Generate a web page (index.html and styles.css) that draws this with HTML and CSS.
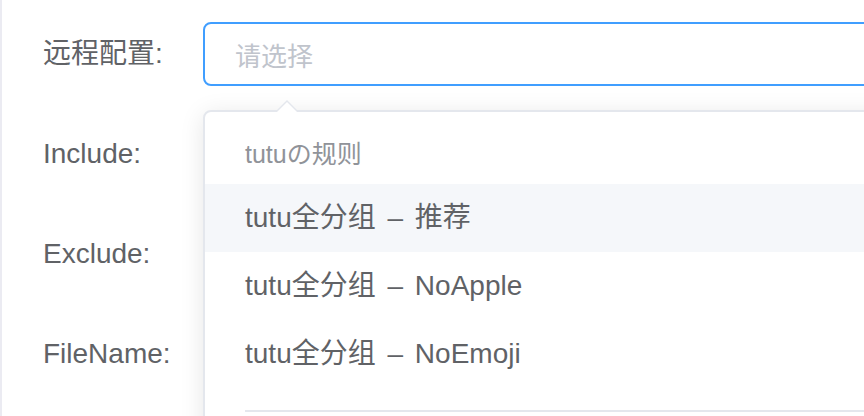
FILE: index.html
```html
<!DOCTYPE html>
<html lang="zh-CN">
<head>
<meta charset="utf-8">
<title>远程配置</title>
<link rel="stylesheet" href="styles.css">
</head>
<body>
<div class="page">
  <form class="form">
    <div class="form-item">
      <label class="form-label">远程配置:</label>
      <div class="form-control">
        <div class="select">
          <div class="select-input">
            <span class="placeholder">请选择</span>
          </div>
          <div class="dropdown">
            <span class="dropdown-arrow"></span>
            <ul class="dropdown-list">
              <li class="group">
                <div class="group-title">tutuの规则</div>
                <ul class="group-items">
                  <li class="option hover">tutu全分组 – 推荐</li>
                  <li class="option">tutu全分组 – NoApple</li>
                  <li class="option">tutu全分组 – NoEmoji</li>
                </ul>
              </li>
            </ul>
          </div>
        </div>
      </div>
    </div>
    <div class="form-item">
      <label class="form-label">Include:</label>
      <div class="form-control"></div>
    </div>
    <div class="form-item">
      <label class="form-label">Exclude:</label>
      <div class="form-control"></div>
    </div>
    <div class="form-item">
      <label class="form-label">FileName:</label>
      <div class="form-control"></div>
    </div>
  </form>
</div>
</body>
</html>
```

FILE: styles.css
```css
* { box-sizing: border-box; }
html, body {
  margin: 0;
  padding: 0;
  background: #ffffff;
  overflow: hidden;
  height: 100%;
}
body {
  font-family: "Liberation Sans", Arial, "Noto Sans CJK SC", sans-serif;
  color: #606266;
}
.page {
  height: 100%;
  border-left: 2px solid #ebebf2;
  padding: 22px 0 0 41px;
}
.form {
  margin: 0;
  display: flex;
  flex-direction: column;
  gap: 36px;
}
.form-item {
  display: flex;
  align-items: flex-start;
  height: 64px;
}
.form-label {
  width: 160px;
  flex: none;
  font-size: 28px;
  line-height: 64px;
  color: #606266;
}
.form-control {
  flex: 1;
  min-width: 0;
}
.select {
  position: relative;
  width: 760px;
}
.select-input {
  height: 64px;
  border: 2px solid #409eff;
  border-radius: 8px;
  padding-left: 30px;
  display: flex;
  align-items: center;
  background: #fff;
}
.placeholder {
  font-size: 26px;
  color: #c0c4cc;
}
.dropdown {
  position: absolute;
  top: 88px;
  left: 0;
  width: 760px;
  background: #fff;
  border: 2px solid #e4e7ed;
  border-radius: 8px;
  box-shadow: 0 4px 24px 0 rgba(0, 0, 0, 0.1);
  z-index: 10;
}
.dropdown-arrow {
  position: absolute;
  top: -12px;
  left: 70px;
  width: 0;
  height: 0;
  border-left: 12px solid transparent;
  border-right: 12px solid transparent;
  border-bottom: 12px solid #e4e7ed;
}
.dropdown-arrow::after {
  content: "";
  position: absolute;
  left: -10px;
  top: 2px;
  border-left: 10px solid transparent;
  border-right: 10px solid transparent;
  border-bottom: 10px solid #fff;
}
.dropdown-list {
  list-style: none;
  margin: 0;
  padding: 12px 0;
}
.group {
  position: relative;
  padding-bottom: 48px;
}
.group::after {
  content: "";
  position: absolute;
  left: 40px;
  right: 40px;
  bottom: 24px;
  height: 2px;
  background: #e4e7ed;
}
.group-title {
  padding-left: 40px;
  font-size: 25px;
  line-height: 60px;
  height: 60px;
  color: #909399;
}
.group-items {
  list-style: none;
  margin: 0;
  padding: 0;
}
.option {
  height: 68px;
  line-height: 68px;
  padding: 0 40px;
  font-size: 28px;
  word-spacing: 4px;
  color: #606266;
  white-space: nowrap;
}
.option.hover {
  background: #f5f7fa;
}
```
